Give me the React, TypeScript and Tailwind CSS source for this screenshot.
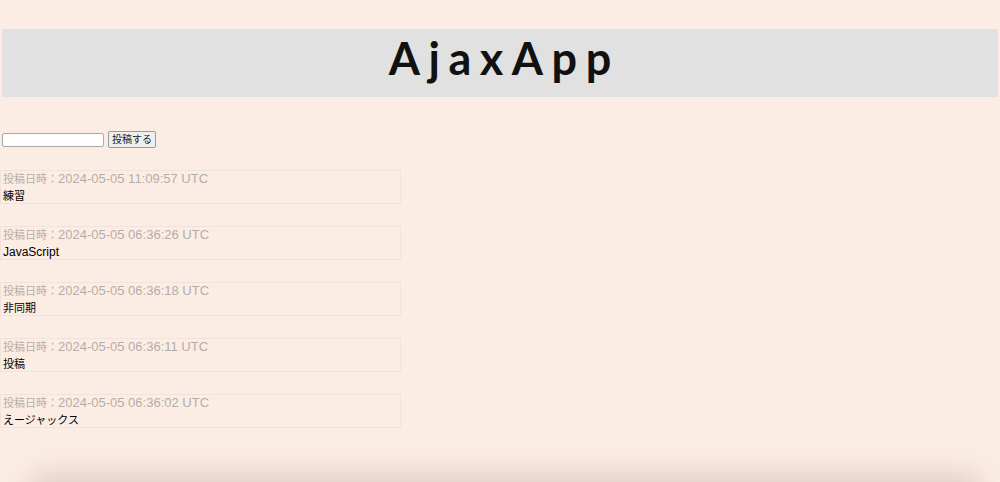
import React from 'react';

type Post = { createdAt: string; body: string; ja?: boolean };

const posts: Post[] = [
  { createdAt: '2024-05-05 11:09:57 UTC', body: '練習', ja: true },
  { createdAt: '2024-05-05 06:36:26 UTC', body: 'JavaScript' },
  { createdAt: '2024-05-05 06:36:18 UTC', body: '非同期', ja: true },
  { createdAt: '2024-05-05 06:36:11 UTC', body: '投稿', ja: true },
  { createdAt: '2024-05-05 06:36:02 UTC', body: 'えージャックス', ja: true },
];

export default function App() {
  return (
    <div className="relative h-[482px] overflow-hidden bg-[#fcede4] font-['Liberation_Sans','Noto_Sans_CJK_JP',sans-serif] text-black">
      <div className="pt-[29px]">
        <header className="mx-[2px] flex h-[68px] items-center justify-center bg-[#e1e1e1] pb-[10px]">
          <h1 className="pl-[0.19em] font-['Lato',sans-serif] text-[45px] font-bold leading-none tracking-[0.19em] text-[#111]">
            AjaxApp
          </h1>
        </header>

        <form className="mt-[34px] flex items-center gap-[4px] pl-[2px]" onSubmit={(e) => e.preventDefault()}>
          <input
            type="text"
            className="h-[14px] w-[102px] rounded-[2px] border border-[#a9a9a9] bg-white"
          />
          <button
            type="submit"
            className="flex h-[17px] w-[48px] items-center justify-center rounded-[2px] border border-[#9a9a9a] bg-[#efefef] text-[10px] leading-none text-[#222]"
          >
            投稿する
          </button>
        </form>

        <div className="mt-[22px] flex flex-col gap-[22px]">
          {posts.map((post) => (
            <div
              key={post.createdAt}
              className="flex h-[34px] w-[401px] flex-col justify-center border border-[#f1e3da] pl-[2px]"
            >
              <div className="text-[13px] leading-[17px] text-[#b3adaa]">
                <span className="text-[11px]">投稿日時：</span>
                {post.createdAt}
              </div>
              <div className={post.ja ? 'text-[11px] leading-[16px]' : 'text-[12px] leading-[16px]'}>
                {post.body}
              </div>
            </div>
          ))}
        </div>
      </div>

      {/* window edge peeking in at the bottom */}
      <div className="absolute bottom-[-40px] left-[30px] right-[20px] h-[40px] rounded-[10px] bg-[#fcede4] shadow-[0_-8px_28px_rgba(90,60,40,0.18)]" />
    </div>
  );
}
